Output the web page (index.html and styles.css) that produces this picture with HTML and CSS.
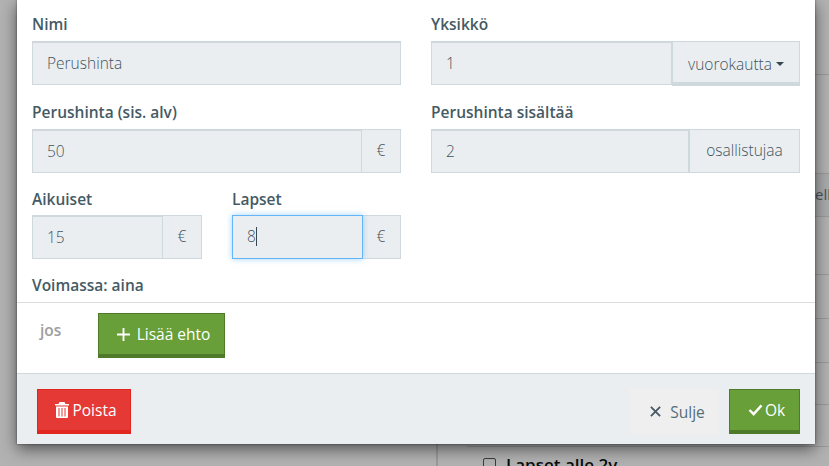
FILE: index.html
```html
<!DOCTYPE html>
<html lang="fi">
<head>
<meta charset="utf-8">
<title>Perushinta</title>
<link rel="stylesheet" href="styles.css">
</head>
<body>
<div class="page">
  <div class="table">
    <div class="row r1"></div>
    <div class="row r2"></div>
    <div class="row r3 shaded"><span class="clip">ell</span></div>
    <div class="row r4"></div>
    <div class="row r5"></div>
    <div class="row r5"></div>
    <div class="row r6"></div>
    <div class="row r6"></div>
    <div class="row r7"><span class="box"></span><span class="under">Lapset alle 2v</span></div>
  </div>
</div>
<div class="backdrop"></div>
<div class="modal">
  <div class="form">
    <div class="col">
      <div class="group">
        <label class="label">Nimi</label>
        <div class="field"><div class="input">Perushinta</div></div>
      </div>
      <div class="group">
        <label class="label">Perushinta (sis. alv)</label>
        <div class="field"><div class="input">50</div><div class="addon euro">€</div></div>
      </div>
      <div class="pair">
        <div class="group">
          <label class="label">Aikuiset</label>
          <div class="field"><div class="input">15</div><div class="addon euro">€</div></div>
        </div>
        <div class="group">
          <label class="label">Lapset</label>
          <div class="field"><div class="input focus">8<span class="caret"></span></div><div class="addon euro">€</div></div>
        </div>
      </div>
    </div>
    <div class="col">
      <div class="group">
        <label class="label">Yksikkö</label>
        <div class="field"><div class="input">1</div><div class="addon drop">vuorokautta<span class="tri"></span></div></div>
      </div>
      <div class="group">
        <label class="label">Perushinta sisältää</label>
        <div class="field"><div class="input">2</div><div class="addon people">osallistujaa</div></div>
      </div>
    </div>
  </div>
  <div class="valid">Voimassa: aina</div>
  <div class="cond">
    <span class="jos">jos</span>
    <button class="btn green add"><svg class="ico plus" viewBox="0 0 14 14"><path d="M6 0h2v6h6v2H8v6H6V8H0V6h6z"/></svg>Lisää ehto</button>
  </div>
  <div class="footer">
    <button class="btn red"><svg class="ico trash" viewBox="0 0 14 16"><path fill-rule="evenodd" d="M4.500 0h5L10.500 2H14v1.500H0V2h3.500zM1 4.500h12V15a1 1 0 0 1-1 1H2a1 1 0 0 1-1-1zM3.500 6v8.500h1V6zM6.500 6v8.500h1V6zM9.500 6v8.500h1V6z"/></svg>Poista</button>
    <div class="right">
      <button class="btn ghost"><svg class="ico cross" viewBox="0 0 12 12"><path d="M1 1l10 10M11 1L1 11"/></svg>Sulje</button>
      <button class="btn green ok"><svg class="ico check" viewBox="0 0 16 13"><path d="M1.500 6.500L6 11l8.500-9.500"/></svg>Ok</button>
    </div>
  </div>
</div>
</body>
</html>
```
FILE: styles.css
```css
html, body {
  margin: 0;
  height: 100%;
  overflow: hidden;
  font-family: "Open Sans", "Noto Sans", sans-serif;
}
.page {
  position: absolute;
  inset: 0;
  background: #fff;
  overflow: hidden;
}
.table {
  margin-left: 436px;
  padding-left: 30px;
  border-left: 1px solid #ddd;
  height: 100%;
  box-shadow: inset 1px 0 0 #ddd;
}
.row {
  box-sizing: border-box;
  border-bottom: 1px solid #ddd;
  white-space: nowrap;
}
.r1 { height: 75px; }
.r2 { height: 99px; }
.r3 { height: 43px; }
.r4 { height: 58px; }
.r5 { height: 44px; }
.r6 { height: 42px; }
.r7 {
  border: 0;
  height: auto;
  padding: 6px 0 0 16px;
  display: flex;
  align-items: center;
  gap: 10px;
}
.shaded { background: #f3f5f7; }
.clip {
  display: block;
  padding: 10px 0 0 348px;
  font-size: 15px;
  color: #607d8b;
}
.box {
  width: 11px;
  height: 11px;
  border: 1px solid #555;
  border-radius: 2px;
  background: #fff;
}
.under {
  font-size: 17px;
  font-weight: 600;
  color: #111;
}
.backdrop {
  position: absolute;
  inset: 0;
  background: rgba(0, 0, 0, .3);
}
.modal {
  position: absolute;
  left: 17px;
  top: 0;
  width: 798px;
  height: 444px;
  box-sizing: border-box;
  background: #fff;
  box-shadow: 0 5px 15px rgba(0, 0, 0, .55), 0 0 2px rgba(0, 0, 0, .5);
  display: flex;
  flex-direction: column;
  color: #455a64;
}
.form {
  display: grid;
  grid-template-columns: 369px 369px;
  column-gap: 30px;
  padding: 14px 15px 0;
  height: 259px;
}
.col { min-width: 0; }
.group { margin-bottom: 17px; }
.pair {
  display: grid;
  grid-template-columns: 170px 169px;
  column-gap: 30px;
  margin-top: -1px;
}
.pair .group { margin: 0; }
.pair .label { margin-bottom: 5px; }
.label {
  display: block;
  height: 21px;
  margin-bottom: 6px;
  line-height: 21px;
  font-size: 15.5px;
  font-weight: 600;
  color: #455a64;
}
.field {
  display: flex;
  height: 44px;
  font-size: 15.5px;
  font-weight: 300;
  color: #3f545e;
}
.input {
  flex: 1;
  min-width: 0;
  box-sizing: border-box;
  padding: 0 14px 2px;
  display: flex;
  align-items: center;
  background: #ebeef1;
  border: 1px solid #cfd8dc;
  border-top-width: 2px;
}
.input.focus {
  border: 1px solid #64b5f6;
  box-shadow: 0 0 6px rgba(100, 181, 246, .6);
  position: relative;
  z-index: 1;
  margin-right: -1px;
}
.caret {
  width: 1px;
  height: 19px;
  background: #37474f;
}
.addon {
  box-sizing: border-box;
  display: flex;
  align-items: center;
  justify-content: center;
  padding-bottom: 2px;
  background: #ebeef1;
  border: 1px solid #cfd8dc;
  border-left: 0;
}
.euro { width: 39px; }
.drop {
  width: 128px;
  height: 45px;
  border-left: 1px solid #cfd8dc;
  border-bottom: 4px solid #cfd8dc;
  padding: 3px 0 0;
}
.tri {
  margin-left: 4px;
  border: 4px solid transparent;
  border-top-color: #37474f;
  border-bottom-width: 0;
}
.people { width: 111px; border-left: 1px solid #cfd8dc; }
.valid {
  padding: 2px 15px 0;
  height: 27px;
  line-height: 21px;
  font-size: 15.5px;
  font-weight: 600;
  color: #455a64;
}
.cond {
  border-top: 1px solid #dcdcdc;
  height: 71px;
  box-sizing: border-box;
  display: flex;
  align-items: flex-start;
  padding: 10px 0 0 23px;
}
.jos {
  width: 58px;
  padding-top: 6px;
  font-size: 15.5px;
  font-weight: 600;
  color: #9e9e9e;
}
.btn {
  box-sizing: border-box;
  height: 45px;
  padding: 0 0 0 4px;
  display: inline-flex;
  align-items: center;
  justify-content: center;
  font: 400 15.5px "Open Sans", "Noto Sans", sans-serif;
  cursor: pointer;
}
.green {
  background: #689f38;
  border: 1px solid #4f7a2a;
  border-bottom: 4px solid #4f7a2a;
  color: #fff;
}
.red {
  width: 94px;
  background: #e53935;
  border: 1px solid #e32520;
  border-bottom: 4px solid #e32520;
  color: #fff;
}
.ghost {
  width: 89px;
  padding-left: 6px;
  background: #efefef;
  border: 0;
  color: #546e7a;
}
.add { width: 127px; }
.ok { width: 71px; }
.ico { display: block; flex: none; }
.plus { width: 13px; height: 13px; fill: #fff; margin-right: 7px; }
.trash { width: 14px; height: 16px; fill: #fff; margin-right: 3px; }
.cross { width: 11px; height: 11px; fill: none; stroke: #455a64; stroke-width: 2; margin-right: 9px; }
.check { width: 15px; height: 12px; fill: none; stroke: #fff; stroke-width: 2.6; margin-right: 2px; }
.footer {
  flex: 1;
  border-top: 1px solid #cfd8dc;
  background: #ebeef1;
  display: flex;
  justify-content: space-between;
  align-items: flex-start;
  padding: 15px 15px 0 20px;
}
.right { display: flex; gap: 10px; }
```
